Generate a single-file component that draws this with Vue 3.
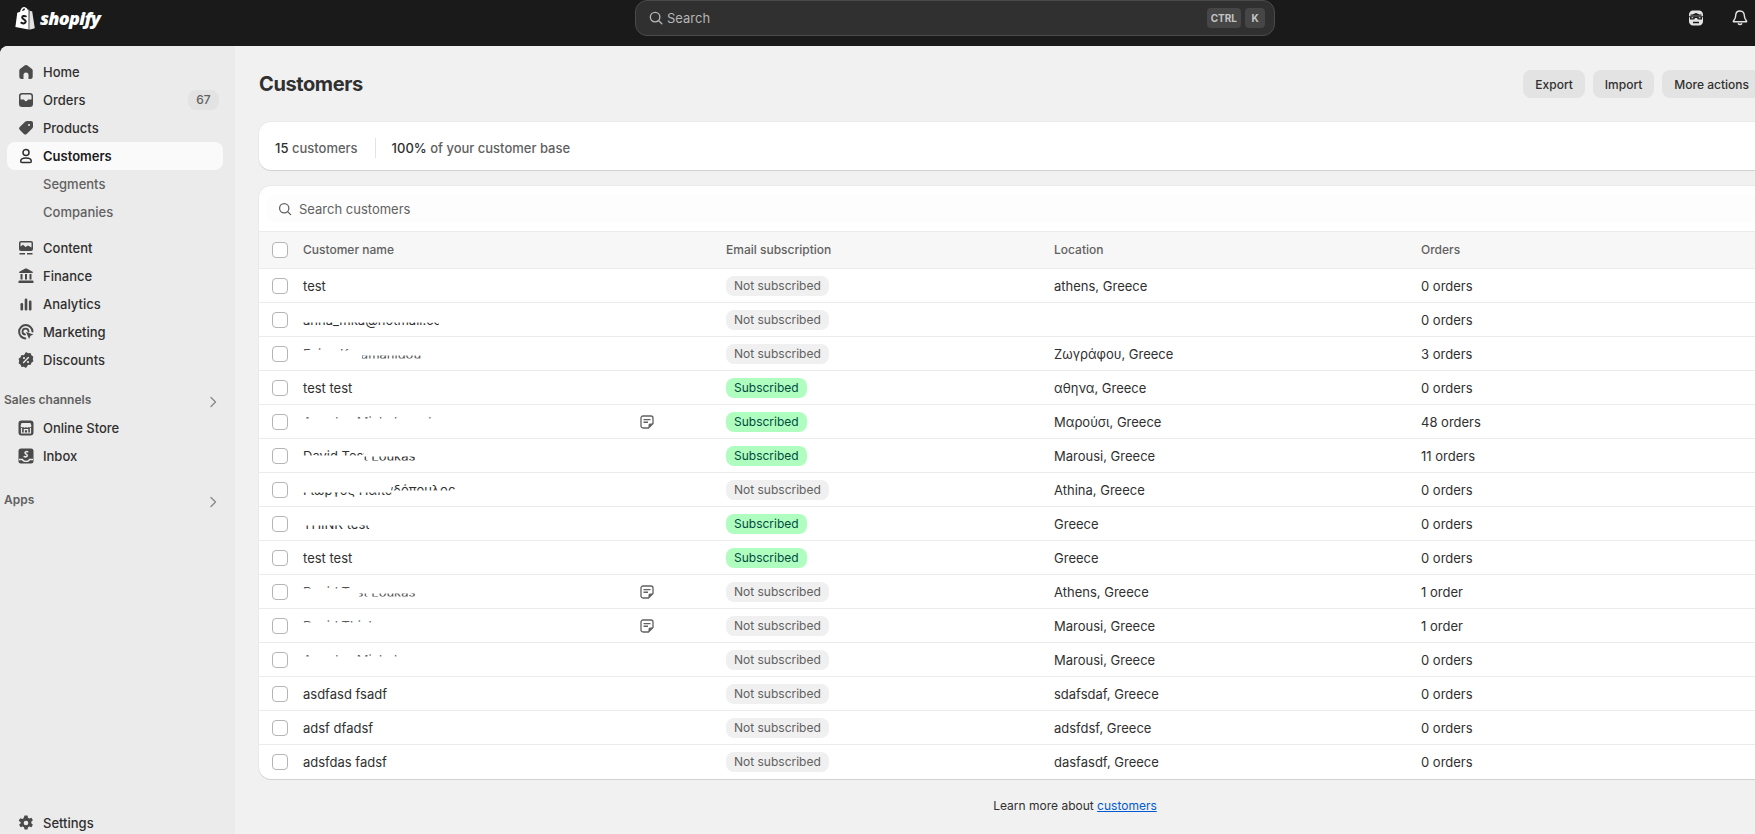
<script setup>
const mainNav = [
  { label: 'Home', icon: 'home' },
  { label: 'Orders', icon: 'orders', badge: '67' },
  { label: 'Products', icon: 'products' },
  { label: 'Customers', icon: 'customers', active: true }
]
const subNav = ['Segments', 'Companies']
const moreNav = [
  { label: 'Content', icon: 'content' },
  { label: 'Finance', icon: 'finance' },
  { label: 'Analytics', icon: 'analytics' },
  { label: 'Marketing', icon: 'marketing' },
  { label: 'Discounts', icon: 'discounts' }
]
const channelNav = [
  { label: 'Online Store', icon: 'store' },
  { label: 'Inbox', icon: 'inbox' }
]

// cut: the names that were wiped in the source screenshot, only a slice of the text stays visible
const customers = [
  { name: 'test', subscribed: false, location: 'athens, Greece', orders: '0 orders' },
  { name: 'anna_mka@hotmail.com', cut: 'low', subscribed: false, location: '', orders: '0 orders' },
  { name: 'Evina Karamanidou', cut: 'thin-low', subscribed: false, location: 'Ζωγράφου, Greece', orders: '3 orders' },
  { name: 'test test', subscribed: true, location: 'αθηνα, Greece', orders: '0 orders' },
  { name: 'Angelos Michalopoulos', cut: 'thin', note: true, subscribed: true, location: 'Μαρούσι, Greece', orders: '48 orders' },
  { name: 'David Test Loukas', cut: 'high-low', subscribed: true, location: 'Marousi, Greece', orders: '11 orders' },
  { name: 'Γιώργος Παπαδόπουλος', cut: 'low-high', subscribed: false, location: 'Athina, Greece', orders: '0 orders' },
  { name: 'THINK test', cut: 'low-full', subscribed: true, location: 'Greece', orders: '0 orders' },
  { name: 'test test', subscribed: true, location: 'Greece', orders: '0 orders' },
  { name: 'David Test Loukas', cut: 'thin-low', note: true, subscribed: false, location: 'Athens, Greece', orders: '1 order' },
  { name: 'David Think', cut: 'thin', note: true, subscribed: false, location: 'Marousi, Greece', orders: '1 order' },
  { name: 'Angelos Michal', cut: 'thin', subscribed: false, location: 'Marousi, Greece', orders: '0 orders' },
  { name: 'asdfasd fsadf', subscribed: false, location: 'sdafsdaf, Greece', orders: '0 orders' },
  { name: 'adsf dfadsf', subscribed: false, location: 'adsfdsf, Greece', orders: '0 orders' },
  { name: 'adsfdas fadsf', subscribed: false, location: 'dasfasdf, Greece', orders: '0 orders' }
]
</script>

<template>
  <div class="page">
    <header class="topbar">
      <div class="logo">
        <svg class="logo-bag" viewBox="0 0 20 23" width="20" height="23">
          <path fill="#fff" d="M13.600 2.600 12.800 2.900C12.300 1.400 11.500.4 10.300.4h-.1C9.800 0 9.400-.1 9 0 6.700.1 5.500 3 5.100 4.800L3 5.400c-.7.2-.7.2-.8.900L.4 20.100l13.200 2.500V2.600zM7 4.300c.4-1.400 1.200-2.700 2.200-3 .6.100.6.800.6 1.700z"/>
          <path fill="#e3e3e3" d="M14.500 2.500 14.300 22.700 19.800 21.300 17.200 4.600c-.1-.3-.3-.4-.5-.4l-1.500-.1-1-1z"/>
          <path fill="none" stroke="#1a1a1a" stroke-width="2" stroke-linecap="round" d="M10.800 9.300c-1.600-.8-3.600-.3-3.600 1.100 0 1.900 3.500 1.900 3.500 4.100 0 2-2.500 2.500-4.400 1.200"/>
        </svg>
        <span class="logo-text">shopify</span>
      </div>
      <div class="top-search">
        <svg class="top-search-icon" viewBox="0 0 20 20" width="18" height="18">
          <circle cx="9" cy="9" r="5.300" fill="none" stroke="currentColor" stroke-width="1.500"/>
          <path d="m13 13 3.500 3.500" fill="none" stroke="currentColor" stroke-width="1.500" stroke-linecap="round"/>
        </svg>
        <span class="top-search-text">Search</span>
        <span class="kbd">CTRL</span>
        <span class="kbd">K</span>
      </div>
      <div class="top-right">
        <svg viewBox="0 0 16 16" width="16" height="16">
          <path fill="#e3e3e3" d="M5 .5h6c2.400 0 4 1.700 4 4v7c0 2.300-1.600 4-4 4H5c-2.400 0-4-1.700-4-4v-7c0-2.300 1.600-4 4-4z"/>
          <path fill="#1a1a1a" d="M2.500 4.500c2 .4 3.600-.8 5.500-1.500 1.900.7 3.500 1.900 5.500 1.500v1.200H2.500zM1 6.300h14v1H14v2.200H9.800L9 8H7L6.200 9.500H2V7.300H1zM5 11.800h6v1.400H5z"/>
          <path fill="#e3e3e3" d="M3.500 7.300h1.800v1H3.500zM10.700 7.300h1.800v1h-1.800z"/>
        </svg>
        <svg viewBox="0 0 16 16" width="16" height="16">
          <path fill="none" stroke="#e3e3e3" stroke-width="1.400" stroke-linejoin="round" d="M8 1c-2.700 0-4.300 2-4.300 4.500 0 3-1.300 4.200-2.300 5.600-.2.300 0 .7.400.7h12.400c.4 0 .6-.4.400-.7-1-1.400-2.300-2.600-2.300-5.600C12.300 3 10.700 1 8 1z"/>
          <path fill="none" stroke="#e3e3e3" stroke-width="1.400" stroke-linecap="round" d="M6.300 13.800c.8 1 2.600 1 3.400 0"/>
        </svg>
      </div>
    </header>

    <div class="layout">
      <aside class="sidebar">
        <nav class="nav-group">
          <a v-for="item in mainNav" :key="item.label" class="nav-item" :class="{ active: item.active }">
            <svg class="nav-icon" viewBox="0 0 20 20" width="20" height="20">
              <template v-if="item.icon === 'home'">
                <path fill="#4a4a4a" d="M8.900 3.300a2 2 0 0 1 2.200 0l4.600 3.400a2.400 2.400 0 0 1 1 1.900V14.500a2.500 2.500 0 0 1-2.500 2.500H12.500V13a2.500 2.500 0 0 0-5 0v4H5.800a2.500 2.500 0 0 1-2.500-2.500V8.600a2.400 2.400 0 0 1 1-1.900z"/>
              </template>
              <template v-else-if="item.icon === 'orders'">
                <path fill="#4a4a4a" fill-rule="evenodd" d="M3 6a3 3 0 0 1 3-3h8a3 3 0 0 1 3 3v8a3 3 0 0 1-3 3H6a3 3 0 0 1-3-3zm1.500 0A1.500 1.500 0 0 1 6 4.500h8A1.500 1.500 0 0 1 15.500 6v3.500h-3.100a1 1 0 0 0-.9.700 1.600 1.600 0 0 1-3 0 1 1 0 0 0-.9-.7H4.500z"/>
              </template>
              <template v-else-if="item.icon === 'products'">
                <path fill="#4a4a4a" fill-rule="evenodd" d="M11.200 3H15a2 2 0 0 1 2 2v3.800a2 2 0 0 1-.6 1.400l-5.700 5.700a2 2 0 0 1-2.800 0L3.700 11.700a2 2 0 0 1 0-2.800l5.700-5.300A2.600 2.600 0 0 1 11.200 3zM13 8a1 1 0 1 0 0-2 1 1 0 0 0 0 2z"/>
              </template>
              <template v-else>
                <circle cx="10" cy="6.500" r="3" fill="none" stroke="#303030" stroke-width="1.500"/>
                <path fill="none" stroke="#303030" stroke-width="1.500" d="M4.700 15.200c0-2 2.100-3.200 5.300-3.200s5.300 1.200 5.300 3.200c0 .8-.5 1.300-1.300 1.300H6c-.8 0-1.300-.5-1.300-1.300z"/>
              </template>
            </svg>
            <span class="nav-label">{{ item.label }}</span>
            <span v-if="item.badge" class="nav-badge">{{ item.badge }}</span>
          </a>
          <a v-for="item in subNav" :key="item" class="nav-item sub">
            <span class="nav-label">{{ item }}</span>
          </a>
        </nav>

        <nav class="nav-group second">
          <a v-for="item in moreNav" :key="item.label" class="nav-item">
            <svg class="nav-icon" viewBox="0 0 20 20" width="20" height="20">
              <template v-if="item.icon === 'content'">
                <path fill="#4a4a4a" fill-rule="evenodd" d="M5 3h10a2 2 0 0 1 2 2v6a2 2 0 0 1-2 2H5a2 2 0 0 1-2-2V5a2 2 0 0 1 2-2zm-.500 5.500L7 6.700l2.500 2.300 2.500-1.500 3.500 2V5a.5.5 0 0 0-.5-.5H5a.5.5 0 0 0-.5.500z"/>
                <path fill="#4a4a4a" d="M3.500 15h5.500v1.500H3.500zM11 15h5.500v1.500H11z"/>
              </template>
              <template v-else-if="item.icon === 'finance'">
                <path fill="#4a4a4a" d="M9.300 2.600a1.500 1.500 0 0 1 1.400 0l5.900 3.200c.5.300.4 1.100-.2 1.200H3.600c-.6-.1-.7-.9-.2-1.200zM4.500 8H6.500v5.500H4.500zM9 8h2v5.500H9zM13.500 8h2v5.500h-2zM3.500 14.500h13a1 1 0 0 1 1 1V17h-15v-1.500a1 1 0 0 1 1-1z"/>
              </template>
              <template v-else-if="item.icon === 'analytics'">
                <rect x="4.500" y="9" width="2.600" height="7.500" rx="1.200" fill="#4a4a4a"/>
                <rect x="8.700" y="4.500" width="2.600" height="12" rx="1.200" fill="#4a4a4a"/>
                <rect x="12.900" y="6.500" width="2.600" height="10" rx="1.200" fill="#4a4a4a"/>
              </template>
              <template v-else-if="item.icon === 'marketing'">
                <path fill="none" stroke="#4a4a4a" stroke-width="2" stroke-linecap="round" d="M9.300 16.500A6.700 6.700 0 1 1 16.500 9.500"/>
                <path fill="none" stroke="#4a4a4a" stroke-width="1.800" stroke-linecap="round" d="M9 12.500a3 3 0 1 1 3.500-3"/>
                <path fill="#4a4a4a" d="M10 10l7.500 2.400-3 1.300-1.400 3.200z"/>
              </template>
              <template v-else>
                <path fill="#4a4a4a" d="M10 2l2.100 1.200 2.400-.2.900 2.300 2 1.400-.6 2.300.6 2.300-2 1.400-.9 2.300-2.400-.2L10 18l-2.100-1.200-2.400.2-.9-2.300-2-1.400.6-2.300-.6-2.300 2-1.400.9-2.300 2.400.2z"/>
                <path fill="none" stroke="#ebebeb" stroke-width="1.400" stroke-linecap="round" d="M12.400 7.600l-4.800 4.800"/>
                <circle cx="8" cy="8" r="1.100" fill="#ebebeb"/>
                <circle cx="12" cy="12" r="1.100" fill="#ebebeb"/>
              </template>
            </svg>
            <span class="nav-label">{{ item.label }}</span>
          </a>
        </nav>

        <div class="section-title channels">
          <span>Sales channels</span>
          <svg class="chevron" viewBox="0 0 16 16" width="16" height="16">
            <path d="m6 3.500 4.500 4.500-4.500 4.500" fill="none" stroke="#8a8a8a" stroke-width="1.400" stroke-linecap="round" stroke-linejoin="round"/>
          </svg>
        </div>
        <nav class="nav-group">
          <a v-for="item in channelNav" :key="item.label" class="nav-item">
            <svg class="nav-icon" viewBox="0 0 20 20" width="20" height="20">
              <template v-if="item.icon === 'store'">
                <rect x="2.500" y="2.500" width="15" height="15" rx="3" fill="#4a4a4a"/>
                <path fill="#ebebeb" d="M5.500 5h9l1 3a1.600 1.600 0 0 1-2.700 1 1.900 1.900 0 0 1-2.800 0 1.900 1.900 0 0 1-2.800 0 1.600 1.600 0 0 1-2.700-1z"/>
                <path fill="none" stroke="#ebebeb" stroke-width="1.200" d="M5.500 10v5h9v-5M8.300 15v-3.300h3.400V15"/>
              </template>
              <template v-else>
                <path fill="#4a4a4a" d="M5 2.500h10a2.500 2.500 0 0 1 2.500 2.500v10a2.500 2.500 0 0 1-2.500 2.500H5A2.500 2.500 0 0 1 2.500 15V5A2.500 2.500 0 0 1 5 2.500z"/>
                <path fill="none" stroke="#ebebeb" stroke-width="1.500" stroke-linecap="round" d="M11.700 5.800c-1-.5-2.700-.2-2.700 1 0 1.300 2.300 1.200 2.300 2.700 0 1.400-1.800 1.700-3.100 1"/>
                <path fill="none" stroke="#ebebeb" stroke-width="1.300" d="M3 13.500h3.500c.3 1.200 1.700 1.800 3.500 1.800s3.200-.6 3.500-1.800H17"/>
              </template>
            </svg>
            <span class="nav-label">{{ item.label }}</span>
          </a>
        </nav>

        <div class="section-title apps">
          <span>Apps</span>
          <svg class="chevron" viewBox="0 0 16 16" width="16" height="16">
            <path d="m6 3.500 4.500 4.500-4.500 4.500" fill="none" stroke="#8a8a8a" stroke-width="1.400" stroke-linecap="round" stroke-linejoin="round"/>
          </svg>
        </div>

        <a class="nav-item settings">
          <svg class="nav-icon" viewBox="0 0 20 20" width="20" height="20">
            <path fill="#4a4a4a" fill-rule="evenodd" d="M8.500 2.500h3l.5 2.200 1.300.7 2.100-.7 1.500 2.600-1.600 1.500v1.400l1.600 1.500-1.500 2.600-2.100-.7-1.300.7-.5 2.200h-3l-.5-2.200-1.300-.7-2.100.7-1.500-2.600 1.600-1.500V9.300L2.700 7.800l1.500-2.600 2.100.7L7.600 5.200zM10 12.300a2.300 2.300 0 1 0 0-4.600 2.300 2.300 0 0 0 0 4.600z"/>
          </svg>
          <span class="nav-label">Settings</span>
        </a>
      </aside>

      <main class="main">
        <div class="page-head">
          <h1 class="page-title">Customers</h1>
          <div class="page-actions">
            <button class="btn">Export</button>
            <button class="btn">Import</button>
            <button class="btn">More actions</button>
          </div>
        </div>

        <section class="card stats">
          <span class="stat"><b>15</b> customers</span>
          <span class="stat-divider"></span>
          <span class="stat"><b>100%</b> of your customer base</span>
        </section>

        <section class="card table-card">
          <div class="table-search">
            <div class="table-search-box">
              <svg viewBox="0 0 20 20" width="16" height="16">
                <circle cx="9" cy="9" r="5.800" fill="none" stroke="#616161" stroke-width="1.600"/>
                <path d="m13.300 13.300 3.700 3.700" fill="none" stroke="#616161" stroke-width="1.600" stroke-linecap="round"/>
              </svg>
              <span>Search customers</span>
            </div>
          </div>

          <div class="row head">
            <span class="check"></span>
            <span class="head-cell">Customer name</span>
            <span class="head-cell">Email subscription</span>
            <span class="head-cell">Location</span>
            <span class="head-cell">Orders</span>
          </div>

          <div v-for="(c, i) in customers" :key="i" class="row">
            <span class="check"></span>
            <div class="name-cell">
              <span class="name" :class="c.cut">{{ c.name }}</span>
              <svg v-if="c.note" class="note" viewBox="0 0 16 16" width="16" height="16">
                <path fill="none" stroke="#616161" stroke-width="1.300" stroke-linejoin="round" d="M4 2h8a2 2 0 0 1 2 2v5.500L9.500 14H4a2 2 0 0 1-2-2V4a2 2 0 0 1 2-2z"/>
                <path fill="#616161" d="M4.500 5h7v1.300h-7zM4.500 7.600h4.500v1.300H4.500zM9.500 14v-3a1.500 1.500 0 0 1 1.500-1.500h3z"/>
              </svg>
            </div>
            <div>
              <span class="pill" :class="{ on: c.subscribed }">{{ c.subscribed ? 'Subscribed' : 'Not subscribed' }}</span>
            </div>
            <span>{{ c.location }}</span>
            <span>{{ c.orders }}</span>
          </div>
        </section>

        <p class="learn">Learn more about <a class="learn-link">customers</a></p>
      </main>
    </div>
  </div>
</template>

<style>
html, body {
  margin: 0;
  overflow: hidden;
  background: #1a1a1a;
}
</style>

<style scoped>
.page {
  width: 1755px;
  height: 834px;
  overflow: hidden;
  font-family: Inter, "Noto Sans", sans-serif;
  font-size: 13px;
  color: #303030;
  background: #1a1a1a;
}

.topbar {
  height: 46px;
  box-sizing: border-box;
  padding-bottom: 10px;
  display: grid;
  grid-template-columns: 635px 640px 1fr;
  align-items: center;
}

.logo {
  display: flex;
  align-items: center;
  padding-left: 15px;
  gap: 5px;
}

.logo-text {
  font-family: "Open Sans", sans-serif;
  font-size: 18px;
  font-weight: 800;
  font-style: italic;
  letter-spacing: -0.7px;
  color: #fff;
}

.top-search {
  height: 36px;
  box-sizing: border-box;
  background: #303030;
  border: 1px solid #4a4a4a;
  border-radius: 12px;
  display: flex;
  align-items: center;
  padding: 0 9px 0 11px;
  gap: 4px;
  color: #b5b5b5;
}

.top-search-icon {
  flex: none;
}

.top-search-text {
  flex: 1;
  margin-left: -2px;
  font-size: 13px;
}

.kbd {
  height: 20px;
  padding: 0 4px;
  min-width: 12px;
  text-align: center;
  line-height: 20px;
  font-size: 10px;
  font-weight: 700;
  border-radius: 4px;
  background: #464646;
  color: #c4c4c4;
}

.top-right {
  display: flex;
  justify-content: flex-end;
  gap: 28px;
  padding-right: 7px;
}

.layout {
  display: flex;
  height: 788px;
  background: #f1f1f1;
  border-top-left-radius: 8px;
  overflow: hidden;
}

.sidebar {
  flex: none;
  width: 235px;
  box-sizing: border-box;
  height: 791px;
  padding-top: 12px;
  background: #ebebeb;
  display: flex;
  flex-direction: column;
}

.nav-group.second {
  margin-top: 8px;
}

.nav-item {
  height: 28px;
  margin: 0 12px 0 7px;
  padding: 0 4px 0 9px;
  border-radius: 8px;
  display: flex;
  align-items: center;
  font-weight: 500;
  color: #303030;
}

.nav-item.active {
  background: #fafafa;
  font-weight: 600;
  color: #1a1a1a;
}

.nav-item.sub {
  padding-left: 36px;
  color: #616161;
}

.nav-icon {
  flex: none;
  margin-right: 7px;
}

.nav-label {
  flex: 1;
}

.nav-badge {
  height: 20px;
  width: 31px;
  border-radius: 8px;
  background: #e3e3e3;
  color: #616161;
  font-size: 12px;
  line-height: 20px;
  text-align: center;
}

.section-title {
  height: 26px;
  padding: 0 14px 2px 4px;
  display: flex;
  align-items: center;
  justify-content: space-between;
  font-size: 12px;
  font-weight: 600;
  color: #616161;
}

.section-title.channels {
  margin-top: 12px;
}

.section-title.apps {
  margin-top: 16px;
}

.chevron {
  margin-top: 6px;
}

.settings {
  margin-top: auto;
}

.main {
  flex: none;
  width: 1656px;
  box-sizing: border-box;
  padding: 24px 0 0 24px;
}

.page-head {
  height: 28px;
  display: flex;
  align-items: center;
  justify-content: space-between;
}

.page-title {
  margin: 0;
  font-size: 20px;
  font-weight: 650;
  letter-spacing: -0.4px;
  color: #303030;
}

/* the row runs on past the window, More actions sits at the right edge */
.page-actions {
  display: flex;
  gap: 8px;
  margin-right: 130px;
}

.btn {
  height: 28px;
  padding: 0 12px;
  border: 0;
  border-radius: 8px;
  background: #e3e3e3;
  color: #303030;
  font: 500 12px Inter, sans-serif;
  white-space: nowrap;
}

.card {
  background: #fff;
  border-radius: 12px;
  box-shadow: 0 1px 0 rgba(0, 0, 0, 0.1), 0 0 0 1px rgba(0, 0, 0, 0.03);
}

.stats {
  margin-top: 24px;
  height: 48px;
  box-sizing: border-box;
  padding: 3px 0 0 16px;
  display: flex;
  align-items: center;
  gap: 17px;
  font-weight: 500;
  color: #616161;
}

.stat b {
  font-weight: 500;
  color: #303030;
}

.stat-divider {
  width: 1px;
  height: 20px;
  margin-right: -1px;
  background: #e3e3e3;
}

.table-card {
  margin-top: 16px;
  overflow: hidden;
}

.table-search {
  height: 46px;
  box-sizing: border-box;
  padding: 9px 8px;
  border-bottom: 1px solid #ebebeb;
}

.table-search-box {
  height: 28px;
  padding-left: 10px;
  border-radius: 8px;
  background: #fdfdfd;
  display: flex;
  align-items: center;
  gap: 6px;
  color: #616161;
}

.row {
  height: 34px;
  box-sizing: border-box;
  border-bottom: 1px solid #ebebeb;
  display: grid;
  grid-template-columns: 44px 423px 328px 367px 1fr;
  align-items: center;
}

.row:last-child {
  border-bottom: 0;
}

.row.head {
  height: 37px;
  background: #f7f7f7;
  font-size: 12px;
  font-weight: 550;
  color: #616161;
}

.head-cell {
  margin-bottom: 2px;
}

.check {
  width: 16px;
  height: 16px;
  box-sizing: border-box;
  margin-left: 13px;
  background: #fff;
  border: 1px solid #b5b5b5;
  border-radius: 4px;
}

.name-cell {
  display: flex;
  align-items: center;
  justify-content: space-between;
  padding-right: 71px;
}

.name {
  display: inline-block;
  line-height: 20px;
}

.name.low {
  clip-path: inset(13px 14px 0 0);
}

.name.low-full {
  clip-path: inset(12px 0 0 0);
}

.name.high-low {
  clip-path: polygon(0 2px, 54% 2px, 54% 11px, 100% 11px, 100% 15px, 54% 15px, 54% 10px, 0 10px);
}

.name.low-high {
  clip-path: polygon(0 13px, 58% 13px, 58% 3px, 100% 3px, 100% 11px, 58% 11px, 58% 18px, 0 18px);
}

.name.thin {
  clip-path: inset(4px 0 13px 0);
  opacity: 0.8;
}

.name.thin-low {
  clip-path: polygon(0 4px, 50% 4px, 50% 12px, 100% 12px, 100% 15px, 50% 15px, 50% 7px, 0 7px);
  opacity: 0.85;
}

.note {
  flex: none;
}

.pill {
  display: inline-block;
  height: 20px;
  padding: 0 8px;
  border-radius: 8px;
  background: #f0f0f0;
  color: #616161;
  font-size: 12px;
  line-height: 20px;
  vertical-align: middle;
}

.pill.on {
  background: #affebf;
  color: #014b40;
}

.learn {
  margin: 17px 0 0;
  text-align: center;
  font-size: 12px;
  line-height: 20px;
}

.learn-link {
  color: #005bd3;
  text-decoration: underline;
}
</style>
